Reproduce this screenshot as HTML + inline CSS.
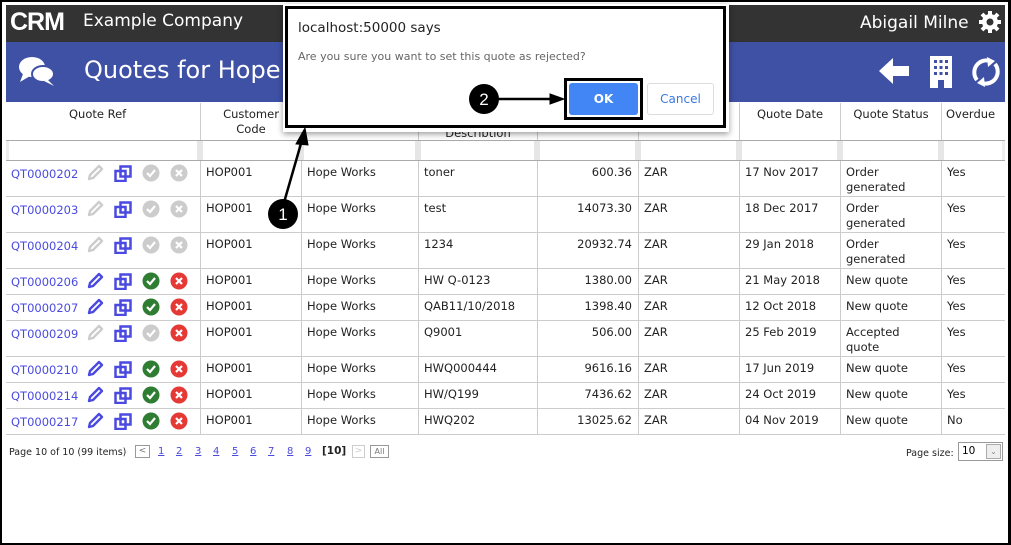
<!DOCTYPE html>
<html><head><meta charset="utf-8"><style>
*{box-sizing:border-box;margin:0;padding:0}
body{width:1011px;height:545px;position:relative;background:#fff;font-family:"DejaVu Sans",sans-serif;overflow:hidden}
.a{position:absolute}
.t{font-size:11.5px;color:#222;position:absolute;line-height:15px;white-space:nowrap}
.lnk{color:#4a4ae0}
.vl{position:absolute;width:1px;background:#ccc}
.hl{position:absolute;height:1px;background:#ccc;left:6px;width:999px}
.pn{position:absolute;top:446px;font-size:10px;color:#4a4ae0;text-decoration:underline}
</style></head><body>
<div class="a" style="left:0;top:0;width:1011px;height:545px;border:2px solid #000;border-right-width:3px"></div>
<div class="a" style="left:6px;top:5px;width:999px;height:37px;background:#333"></div>
<div class="a" style="left:6px;top:42px;width:999px;height:60px;background:#3f51a5"></div>
<div class="a" style="left:10px;top:10px;font:bold 25px 'Liberation Sans',sans-serif;color:#fff;letter-spacing:-1px;line-height:24px">CRM</div>
<div class="a" style="left:83px;top:11px;font-size:17px;color:#fff">Example Company</div>
<div class="a" style="left:860px;top:13px;font-size:17px;color:#fff">Abigail Milne</div>
<svg class="a" style="left:978px;top:10px" width="24" height="24" viewBox="0 0 24 24"><g fill="#fff"><circle cx="12" cy="12" r="8"/><g stroke="#fff" stroke-width="4"><line x1="12" y1="1" x2="12" y2="23"/><line x1="1" y1="12" x2="23" y2="12"/><line x1="4" y1="4" x2="20" y2="20"/><line x1="20" y1="4" x2="4" y2="20"/></g></g><circle cx="12" cy="12" r="3.5" fill="#333"/></svg>
<svg class="a" style="left:18px;top:54px" width="38" height="34" viewBox="0 0 38 34"><ellipse cx="14" cy="13" rx="13" ry="10" fill="#fff"/><path d="M5 20 L2 28 L12 22Z" fill="#fff"/><ellipse cx="25" cy="20" rx="11" ry="8" fill="#fff" stroke="#3f51a5" stroke-width="2"/><path d="M30 26 L36 32 L26 27Z" fill="#fff"/></svg>
<div class="a" style="left:84px;top:56px;font-size:24px;color:#fff">Quotes for Hope</div>
<svg class="a" style="left:877px;top:56px" width="34" height="30" viewBox="0 0 34 30"><path d="M2 15 L16 2 L16 10 L32 10 L32 20 L16 20 L16 28Z" fill="#fff"/></svg>
<svg class="a" style="left:929px;top:56px" width="24" height="32" viewBox="0 0 24 32"><rect x="1" y="0" width="22" height="32" fill="#fff"/><g fill="#3f51a5"><rect x="5" y="4" width="3" height="3"/><rect x="10.5" y="4" width="3" height="3"/><rect x="16" y="4" width="3" height="3"/><rect x="5" y="10" width="3" height="3"/><rect x="10.5" y="10" width="3" height="3"/><rect x="16" y="10" width="3" height="3"/><rect x="5" y="16" width="3" height="3"/><rect x="10.5" y="16" width="3" height="3"/><rect x="16" y="16" width="3" height="3"/><rect x="9" y="24" width="6" height="8"/></g></svg>
<svg class="a" style="left:970px;top:56px" width="32" height="32" viewBox="0 0 32 32"><g fill="none" stroke="#fff" stroke-width="4"><path d="M7 24 A12 12 0 0 1 20 5"/><path d="M25 8 A12 12 0 0 1 12 27"/></g><path d="M17 1 L25 5 L18 11Z" fill="#fff"/><path d="M15 31 L7 27 L14 21Z" fill="#fff"/></svg>

<div class="vl" style="left:200px;top:103px;height:332px"></div>
<div class="vl" style="left:301px;top:103px;height:332px"></div>
<div class="vl" style="left:418px;top:103px;height:332px"></div>
<div class="vl" style="left:537px;top:103px;height:332px"></div>
<div class="vl" style="left:638px;top:103px;height:332px"></div>
<div class="vl" style="left:739px;top:103px;height:332px"></div>
<div class="vl" style="left:840px;top:103px;height:332px"></div>
<div class="vl" style="left:941px;top:103px;height:332px"></div>
<div class="hl" style="top:140px;background:#aaa"></div>
<div class="a" style="left:6px;top:141px;width:999px;height:19px;border-left:3px solid #eee;border-right:3px solid #eee"></div>
<div class="a" style="left:197px;top:141px;width:6px;height:19px;background:#e6e6e6"></div>
<div class="a" style="left:298px;top:141px;width:6px;height:19px;background:#e6e6e6"></div>
<div class="a" style="left:415px;top:141px;width:6px;height:19px;background:#e6e6e6"></div>
<div class="a" style="left:534px;top:141px;width:6px;height:19px;background:#e6e6e6"></div>
<div class="a" style="left:635px;top:141px;width:6px;height:19px;background:#e6e6e6"></div>
<div class="a" style="left:736px;top:141px;width:6px;height:19px;background:#e6e6e6"></div>
<div class="a" style="left:837px;top:141px;width:6px;height:19px;background:#e6e6e6"></div>
<div class="a" style="left:938px;top:141px;width:6px;height:19px;background:#e6e6e6"></div>
<div class="hl" style="top:160px;background:#aaa"></div>
<div class="hl" style="top:196px"></div><div class="hl" style="top:232px"></div><div class="hl" style="top:268px"></div><div class="hl" style="top:294px"></div><div class="hl" style="top:320px"></div><div class="hl" style="top:356px"></div><div class="hl" style="top:382px"></div><div class="hl" style="top:408px"></div><div class="hl" style="top:434px"></div>

<div class="t" style="left:69px;top:107px">Quote Ref</div>
<div class="t" style="left:201px;top:107px;width:100px;text-align:center">Customer<br>Code</div>
<div class="t" style="left:740px;top:107px;width:100px;text-align:center">Quote Date</div>
<div class="t" style="left:841px;top:107px;width:100px;text-align:center">Quote Status</div>
<div class="t" style="left:946px;top:107px">Overdue</div>

<div id="rows"></div>

<div class="t" style="left:9px;top:445px;font-size:9.5px">Page 10 of 10 (99 items)</div>
<div class="a" style="left:135px;top:445px;width:15px;height:13px;border:1px solid #999;font-size:9px;color:#777;text-align:center;line-height:11px">&lt;</div>
<span class="pn" style="left:158px">1</span><span class="pn" style="left:176px">2</span><span class="pn" style="left:195px">3</span><span class="pn" style="left:213px">4</span><span class="pn" style="left:232px">5</span><span class="pn" style="left:250px">6</span><span class="pn" style="left:268px">7</span><span class="pn" style="left:287px">8</span><span class="pn" style="left:305px">9</span>
<div class="t" style="left:322px;top:444px;font-size:10.5px;font-weight:bold">[10]</div>
<div class="a" style="left:352px;top:445px;width:13px;height:13px;border:1px solid #ccc;font-size:9px;color:#ccc;text-align:center;line-height:11px">&gt;</div>
<div class="a" style="left:370px;top:445px;width:19px;height:13px;border:1px solid #999;font-size:8px;color:#777;text-align:center;line-height:11px">All</div>
<div class="t" style="left:906px;top:446px;font-size:9.5px">Page size:</div>
<div class="a" style="left:958px;top:442px;width:45px;height:19px;border:1px solid #999;font-size:10.5px;padding:2px 3px">10</div>
<div class="a" style="left:986px;top:444px;width:15px;height:15px;border:1px solid #aaa;background:#eee;font-size:8px;color:#888;text-align:center;line-height:13px">⌄</div>

<div class="a" style="left:419px;top:126px;width:118px;font-size:11.5px;color:#222;text-align:center;height:11px;overflow:hidden;line-height:15px">Description</div>
<div class="a" style="left:283px;top:4px;width:446px;height:128px;background:#fff;box-shadow:0 2px 6px rgba(0,0,0,.4)"></div>
<div class="a" style="left:285px;top:6px;width:441px;height:122px;border:3px solid #000"></div>
<div class="a" style="left:298px;top:20px;font-size:13.5px;color:#222">localhost:50000 says</div>
<div class="a" style="left:298px;top:50px;font-size:11px;color:#666">Are you sure you want to set this quote as rejected?</div>
<div class="a" style="left:564px;top:78px;width:79px;height:42px;border:3px solid #000"></div>
<div class="a" style="left:569px;top:83px;width:69px;height:32px;background:#4285f4;border-radius:3px;color:#fff;font:bold 12px 'DejaVu Sans',sans-serif;text-align:center;line-height:32px">OK</div>
<div class="a" style="left:647px;top:83px;width:67px;height:32px;border:1px solid #ddd;border-radius:3px;color:#3a78e0;font:12px 'DejaVu Sans',sans-serif;text-align:center;line-height:30px">Cancel</div>
<svg class="a" style="left:0;top:0" width="1011" height="545"><g stroke="#000" stroke-width="2.5" fill="#000"><line x1="283" y1="206" x2="302" y2="140"/><path d="M305 128 L296 144 L308 145Z" stroke-width="1"/><line x1="497" y1="99" x2="555" y2="99"/><path d="M564 99 L550 94 L550 104Z" stroke-width="1"/></g><circle cx="283" cy="214" r="15" fill="#000"/><circle cx="484" cy="99" r="15" fill="#000"/><text x="283" y="220" font-size="17" fill="#fff" text-anchor="middle" font-family="Liberation Sans">1</text><text x="484" y="105" font-size="17" fill="#fff" text-anchor="middle" font-family="Liberation Sans">2</text></svg>

<script>
var rows=[
["QT0000202","toner","600.36","17 Nov 2017","Order<br>generated","Yes",165,0],
["QT0000203","test","14073.30","18 Dec 2017","Order<br>generated","Yes",201,0],
["QT0000204","1234","20932.74","29 Jan 2018","Order<br>generated","Yes",237,0],
["QT0000206","HW Q-0123","1380.00","21 May 2018","New quote","Yes",273,1],
["QT0000207","QAB11/10/2018","1398.40","12 Oct 2018","New quote","Yes",299,1],
["QT0000209","Q9001","506.00","25 Feb 2019","Accepted<br>quote","Yes",325,2],
["QT0000210","HWQ000444","9616.16","17 Jun 2019","New quote","Yes",361,1],
["QT0000214","HW/Q199","7436.62","24 Oct 2019","New quote","Yes",387,1],
["QT0000217","HWQ202","13025.62","04 Nov 2019","New quote","No",413,1]];
var h='';
rows.forEach(function(r){var y=r[6],s=r[7];
var pc=s==1?'#4a4ae0':'#ccc',cc=s==1?'#2e7d32':'#ccc',xc=s>=1?'#e53935':'#ccc';
var iy=y-1;
h+='<div class="t lnk" style="left:11px;top:'+(y+2)+'px">'+r[0]+'</div>';
h+='<svg class="a" style="left:86px;top:'+iy+'px" width="18" height="18" viewBox="0 0 18 18"><path d="M3 15 L4 11 L13 2 L16 5 L7 14Z" fill="none" stroke="'+pc+'" stroke-width="2.4" stroke-linejoin="round"/></svg>';
h+='<svg class="a" style="left:114px;top:'+iy+'px" width="18" height="18" viewBox="0 0 18 18"><rect x="6.5" y="2.5" width="10" height="10" fill="none" stroke="#4a4ae0" stroke-width="2.5"/><rect x="1.5" y="7" width="10" height="10" fill="none" stroke="#4a4ae0" stroke-width="2.5"/></svg>';
h+='<svg class="a" style="left:142px;top:'+iy+'px" width="18" height="18" viewBox="0 0 18 18"><circle cx="9" cy="9" r="8.5" fill="'+cc+'"/><path d="M5 9 L8 12 L13 6" fill="none" stroke="#fff" stroke-width="2.2"/></svg>';
h+='<svg class="a" style="left:170px;top:'+iy+'px" width="18" height="18" viewBox="0 0 18 18"><circle cx="9" cy="9" r="8.5" fill="'+xc+'"/><path d="M6 6 L12 12 M12 6 L6 12" stroke="#fff" stroke-width="2.2"/></svg>';
h+='<div class="t" style="left:206px;top:'+y+'px">HOP001</div>';
h+='<div class="t" style="left:307px;top:'+y+'px">Hope Works</div>';
h+='<div class="t" style="left:424px;top:'+y+'px">'+r[1]+'</div>';
h+='<div class="t" style="left:538px;width:94px;text-align:right;top:'+y+'px">'+r[2]+'</div>';
h+='<div class="t" style="left:644px;top:'+y+'px">ZAR</div>';
h+='<div class="t" style="left:745px;top:'+y+'px">'+r[3]+'</div>';
h+='<div class="t" style="left:846px;top:'+y+'px">'+r[4]+'</div>';
h+='<div class="t" style="left:947px;top:'+y+'px">'+r[5]+'</div>';
});
document.getElementById('rows').innerHTML=h;
</script>
</body></html>
